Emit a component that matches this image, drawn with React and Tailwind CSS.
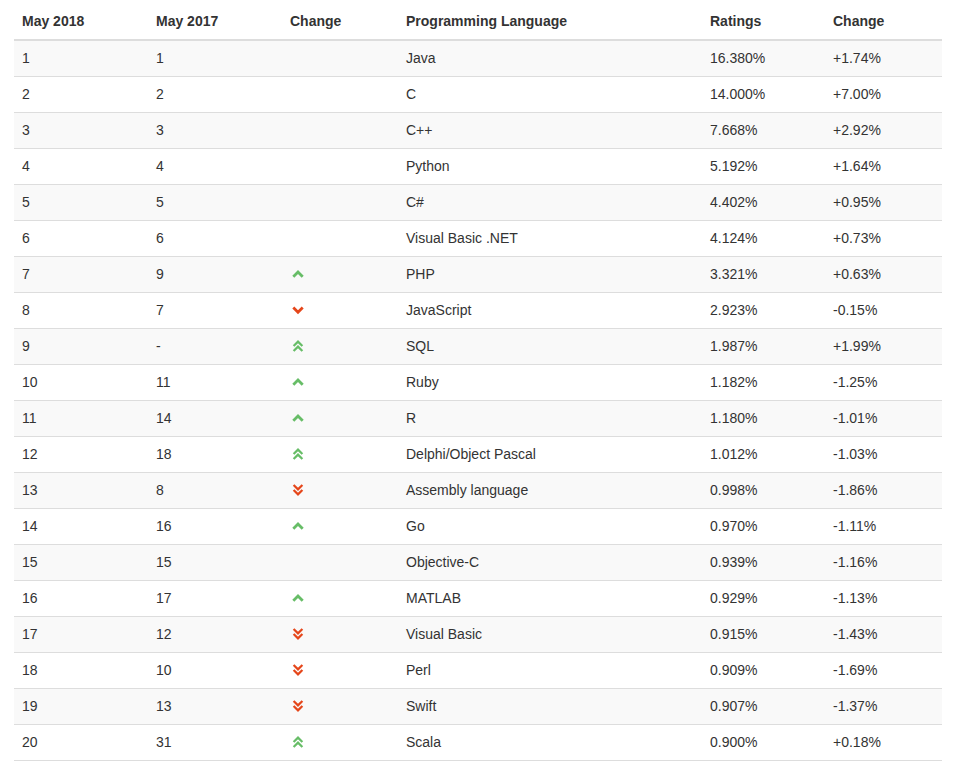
import React from "react";

const rows = [
  ["1", "1", null, "Java", "16.380%", "+1.74%"],
  ["2", "2", null, "C", "14.000%", "+7.00%"],
  ["3", "3", null, "C++", "7.668%", "+2.92%"],
  ["4", "4", null, "Python", "5.192%", "+1.64%"],
  ["5", "5", null, "C#", "4.402%", "+0.95%"],
  ["6", "6", null, "Visual Basic .NET", "4.124%", "+0.73%"],
  ["7", "9", "up", "PHP", "3.321%", "+0.63%"],
  ["8", "7", "down", "JavaScript", "2.923%", "-0.15%"],
  ["9", "-", "up2", "SQL", "1.987%", "+1.99%"],
  ["10", "11", "up", "Ruby", "1.182%", "-1.25%"],
  ["11", "14", "up", "R", "1.180%", "-1.01%"],
  ["12", "18", "up2", "Delphi/Object Pascal", "1.012%", "-1.03%"],
  ["13", "8", "down2", "Assembly language", "0.998%", "-1.86%"],
  ["14", "16", "up", "Go", "0.970%", "-1.11%"],
  ["15", "15", null, "Objective-C", "0.939%", "-1.16%"],
  ["16", "17", "up", "MATLAB", "0.929%", "-1.13%"],
  ["17", "12", "down2", "Visual Basic", "0.915%", "-1.43%"],
  ["18", "10", "down2", "Perl", "0.909%", "-1.69%"],
  ["19", "13", "down2", "Swift", "0.907%", "-1.37%"],
  ["20", "31", "up2", "Scala", "0.900%", "+0.18%"],
];

function Icon({ type }) {
  if (!type) return null;
  const green = "#67bd67";
  const red = "#e5461a";
  const common = { fill: "none", strokeLinecap: "butt", strokeLinejoin: "miter" };
  if (type === "up")
    return (
      <svg width="14" height="14" viewBox="0 0 14 14" className="block">
        <polyline points="2.3,9.8 7,5.1 11.7,9.8" stroke={green} strokeWidth="2.8" {...common} />
      </svg>
    );
  if (type === "down")
    return (
      <svg width="14" height="14" viewBox="0 0 14 14" className="block">
        <polyline points="2.3,4.6 7,9.3 11.7,4.6" stroke={red} strokeWidth="2.8" {...common} />
      </svg>
    );
  if (type === "up2")
    return (
      <svg width="14" height="14" viewBox="0 0 14 14" className="block">
        <polyline points="2.6,7 7,2.6 11.4,7" stroke={green} strokeWidth="2.2" {...common} />
        <polyline points="2.6,12 7,7.6 11.4,12" stroke={green} strokeWidth="2.2" {...common} />
      </svg>
    );
  return (
    <svg width="14" height="14" viewBox="0 0 14 14" className="block">
      <polyline points="2.6,2 7,6.4 11.4,2" stroke={red} strokeWidth="2.2" {...common} />
      <polyline points="2.6,7 7,11.4 11.4,7" stroke={red} strokeWidth="2.2" {...common} />
    </svg>
  );
}

const cols = "grid grid-cols-[134px_134px_116px_304px_123px_117px]";

export default function App() {
  return (
    <div
      className="bg-white min-h-[769px] text-[14px] leading-[20px] text-[#333]"
      style={{ fontFamily: '"Liberation Sans", Arial, sans-serif' }}
    >
      <div className="ml-[14px] w-[928px]">
        <div className={`${cols} h-[41px] items-end border-b-2 border-[#ddd] font-bold`}>
          <div className="px-2 pb-2">May 2018</div>
          <div className="px-2 pb-2">May 2017</div>
          <div className="px-2 pb-2">Change</div>
          <div className="px-2 pb-2">Programming Language</div>
          <div className="px-2 pb-2">Ratings</div>
          <div className="px-2 pb-2">Change</div>
        </div>
        {rows.map((r, i) => (
          <div
            key={i}
            className={`${cols} h-[36px] items-start pt-[7px] border-b border-[#ddd] ${
              i % 2 === 0 ? "bg-[#f9f9f9]" : "bg-white"
            }`}
          >
            <div className="px-2">{r[0]}</div>
            <div className="px-2">{r[1]}</div>
            <div className="pl-[8.5px] h-[20px] flex items-center">
              <Icon type={r[2]} />
            </div>
            <div className="px-2">{r[3]}</div>
            <div className="px-2">{r[4]}</div>
            <div className="px-2">{r[5]}</div>
          </div>
        ))}
      </div>
    </div>
  );
}
